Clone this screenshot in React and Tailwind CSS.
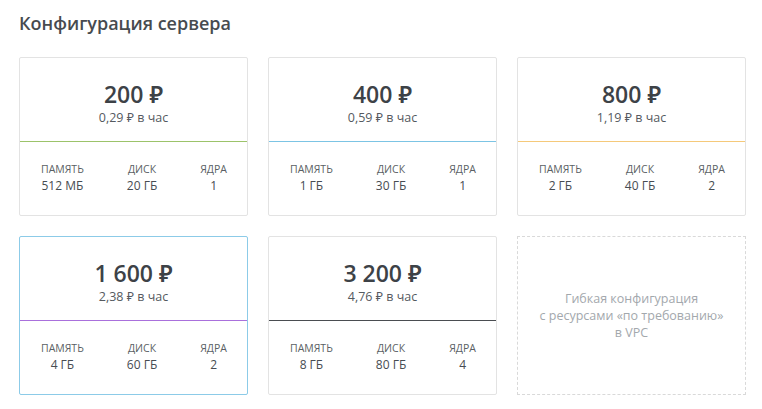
import React from "react";

const plans = [
  { price: "200", hour: "0,29", mem: "512 МБ", disk: "20 ГБ", cores: "1", line: "bg-[#9cc36a]" },
  { price: "400", hour: "0,59", mem: "1 ГБ", disk: "30 ГБ", cores: "1", line: "bg-[#7cc4e4]" },
  { price: "800", hour: "1,19", mem: "2 ГБ", disk: "40 ГБ", cores: "2", line: "bg-[#f5c97a]" },
  { price: "1 600", hour: "2,38", mem: "4 ГБ", disk: "60 ГБ", cores: "2", line: "bg-[#a970dc]", active: true },
  { price: "3 200", hour: "4,76", mem: "8 ГБ", disk: "80 ГБ", cores: "4", line: "bg-[#4a4d51]" },
];

function Spec({ label, value }) {
  return (
    <div className="flex flex-col items-center">
      <span className="text-[10.5px] leading-[16px] text-[#5a5f64] uppercase">{label}</span>
      <span className="text-[12px] leading-[17px] text-[#474c52]">{value}</span>
    </div>
  );
}

function PlanCard({ plan }) {
  return (
    <div
      className={
        "h-[159px] bg-white border rounded-[2px] flex flex-col " +
        (plan.active ? "border-[#8ccbe8]" : "border-[#e3e3e3]")
      }
    >
      <div className="h-[83px] flex flex-col items-center pt-[22px]">
        <div className="text-[23px] leading-[28px] font-semibold text-[#3d4247]">
          {plan.price} ₽
        </div>
        <div className="text-[12.5px] leading-[17px] mt-[1px] text-[#555a5f]">
          {plan.hour} ₽ в час
        </div>
      </div>
      <div className={"h-px w-full " + plan.line} />
      <div className="flex-1 flex items-center justify-between pl-[21px] pr-[20px] pb-[2px]">
        <Spec label="Память" value={plan.mem} />
        <Spec label="Диск" value={plan.disk} />
        <Spec label="Ядра" value={plan.cores} />
      </div>
    </div>
  );
}

export default function App() {
  return (
    <div
      className="w-[762px] h-[409px] bg-white px-[19px] pt-[9px]"
      style={{ fontFamily: '"Open Sans", "Noto Sans", sans-serif' }}
    >
      <h1 className="text-[18px] leading-[28px] font-semibold text-[#474b4f] mb-[20px]">
        Конфигурация сервера
      </h1>
      <div className="grid grid-cols-3 gap-x-[20px] gap-y-[20px] w-[727px]">
        {plans.map((p) => (
          <PlanCard key={p.price} plan={p} />
        ))}
        <div className="h-[159px] border border-dashed border-[#d9d9d9] flex items-center justify-center text-center">
          <p className="text-[12.5px] leading-[17px] text-[#a3a8ad]">
            Гибкая конфигурация
            <br />
            с ресурсами «по требованию»
            <br />в VPC
          </p>
        </div>
      </div>
    </div>
  );
}
